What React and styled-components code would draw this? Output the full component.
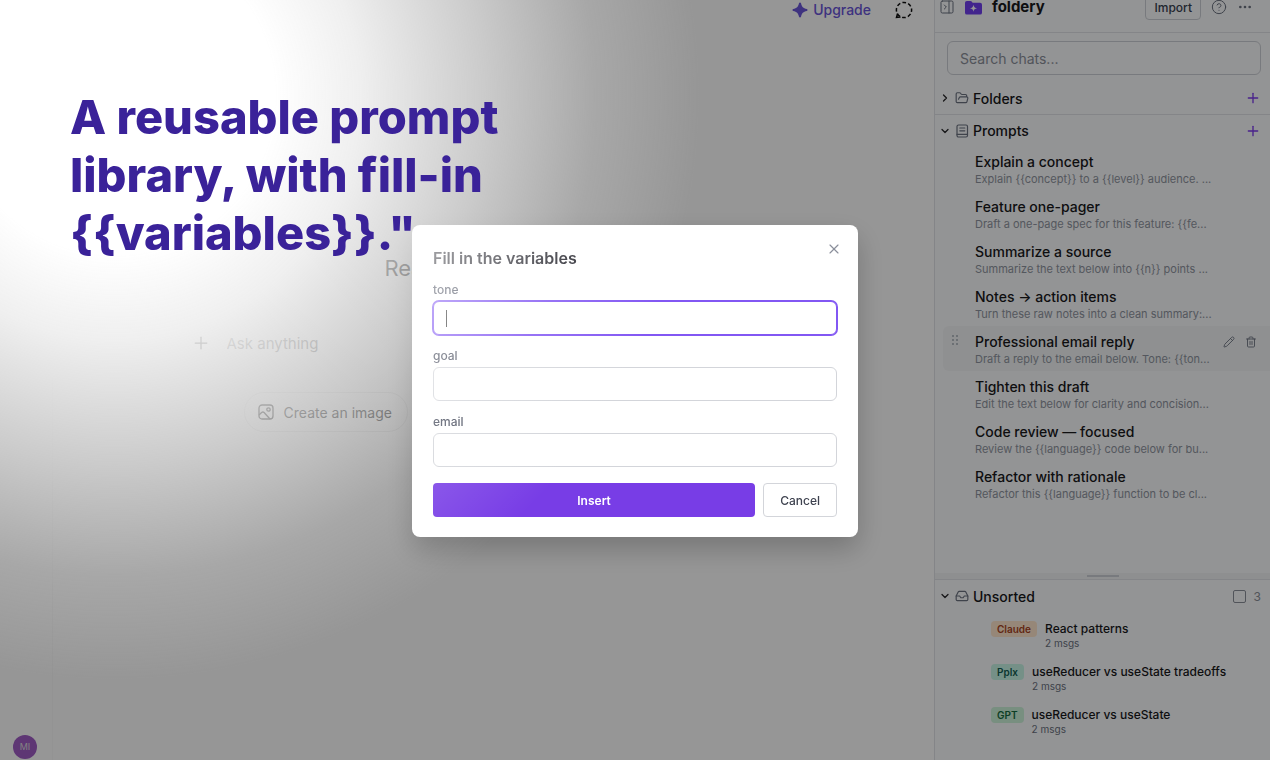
import styled, { createGlobalStyle, css } from "styled-components"
import {
    ChevronDown,
    ChevronRight,
    CircleHelp,
    Ellipsis,
    FolderOpen,
    Globe,
    Inbox,
    PanelRightClose,
    Pencil,
    PenLine,
    Plus,
    Trash2,
    X,
} from "lucide-react"

const prompts = [
    { title: "Explain a concept", text: "Explain {{concept}} to a {{level}} audience. ..." },
    { title: "Feature one-pager", text: "Draft a one-page spec for this feature: {{fe..." },
    { title: "Summarize a source", text: "Summarize the text below into {{n}} points ..." },
    { title: "Notes → action items", text: "Turn these raw notes into a clean summary:..." },
    { title: "Professional email reply", text: "Draft a reply to the email below. Tone: {{ton...", active: true },
    { title: "Tighten this draft", text: "Edit the text below for clarity and concision..." },
    { title: "Code review — focused", text: "Review the {{language}} code below for bu..." },
    { title: "Refactor with rationale", text: "Refactor this {{language}} function to be cl..." },
]

const chats = [
    { source: "Claude", title: "React patterns", count: "2 msgs" },
    { source: "Pplx", title: "useReducer vs useState tradeoffs", count: "2 msgs" },
    { source: "GPT", title: "useReducer vs useState", count: "2 msgs" },
]

const badgeColors = {
    Claude: { bg: "#ffe6cc", text: "#a8431f" },
    Pplx: { bg: "#c8f5e6", text: "#115e52" },
    GPT: { bg: "#ccf3da", text: "#166c40" },
}

const fields = ["tone", "goal", "email"]

const App = () => {
    return (
        <>
            <GlobalStyle />
            <Shell>
                <Rail>
                    <Avatar>MI</Avatar>
                </Rail>
                <ChatPage />
                <Panel />
            </Shell>
            <Scrim>
                <VariablesDialog />
            </Scrim>
            <Glow />
            <Headline>A reusable prompt library, with fill-in {"{{variables}}.\""}</Headline>
        </>
    )
}

const ChatPage = () => {
    return (
        <Main>
            <TopBar>
                <UpgradeButton>
                    <SparkIcon />
                    Upgrade
                </UpgradeButton>
                <IconButton aria-label="Temporary chat">
                    <DashedChatIcon />
                </IconButton>
            </TopBar>
            <Greeting>Ready when you are.</Greeting>
            <Composer>
                <Plus size={20} strokeWidth={1.5} />
                <ComposerInput placeholder="Ask anything" aria-label="Ask anything" />
            </Composer>
            <Chips>
                <Chip>
                    <ImageIcon />
                    Create an image
                </Chip>
                <Chip>
                    <PenLine size={16} strokeWidth={1.5} />
                    Write or edit
                </Chip>
                <Chip>
                    <Globe size={16} strokeWidth={1.5} />
                    Look something up
                </Chip>
            </Chips>
        </Main>
    )
}

const Panel = () => {
    return (
        <PanelBox>
            <PanelHeader>
                <IconButton aria-label="Close panel">
                    <PanelRightClose size={16} strokeWidth={1.5} />
                </IconButton>
                <LogoIcon />
                <Brand>foldery</Brand>
                <ImportButton>Import</ImportButton>
                <IconButton aria-label="Help">
                    <CircleHelp size={16} strokeWidth={1.5} />
                </IconButton>
                <IconButton aria-label="More">
                    <Ellipsis size={16} strokeWidth={2} />
                </IconButton>
            </PanelHeader>
            <SearchRow>
                <SearchInput placeholder="Search chats..." aria-label="Search chats" />
            </SearchRow>
            <Section>
                <ChevronRight size={12} strokeWidth={2.5} />
                <FolderOpen size={14} strokeWidth={2} color="#6b7280" />
                <SectionTitle>Folders</SectionTitle>
                <AddButton aria-label="Add folder">
                    <Plus size={16} strokeWidth={2} />
                </AddButton>
            </Section>
            <Section $line>
                <ChevronDown size={12} strokeWidth={2.5} />
                <NoteIcon />
                <SectionTitle>Prompts</SectionTitle>
                <AddButton aria-label="Add prompt">
                    <Plus size={16} strokeWidth={2} />
                </AddButton>
            </Section>
            <PromptList>
                {prompts.map((prompt) => (
                    <PromptRow key={prompt.title} $active={prompt.active}>
                        <GripSlot>{prompt.active && <GripIcon />}</GripSlot>
                        <PromptText>
                            <PromptTitle>{prompt.title}</PromptTitle>
                            <PromptPreview>{prompt.text}</PromptPreview>
                        </PromptText>
                        {prompt.active && (
                            <RowActions>
                                <IconButton aria-label="Edit prompt">
                                    <Pencil size={12} strokeWidth={1.75} />
                                </IconButton>
                                <IconButton aria-label="Delete prompt">
                                    <Trash2 size={12} strokeWidth={1.75} />
                                </IconButton>
                            </RowActions>
                        )}
                    </PromptRow>
                ))}
            </PromptList>
            <Resizer>
                <ResizerHandle />
            </Resizer>
            <UnsortedBox>
                <Section>
                    <ChevronDown size={12} strokeWidth={2.5} />
                    <Inbox size={14} strokeWidth={2} color="#6b7280" />
                    <SectionTitle>Unsorted</SectionTitle>
                    <SelectAll type="checkbox" aria-label="Select all" />
                    <Count>3</Count>
                </Section>
                <ChatList>
                    {chats.map((chat) => (
                        <ChatRow key={chat.title}>
                            <Badge $colors={badgeColors[chat.source]}>{chat.source}</Badge>
                            <div>
                                <ChatTitle>{chat.title}</ChatTitle>
                                <ChatMeta>{chat.count}</ChatMeta>
                            </div>
                        </ChatRow>
                    ))}
                </ChatList>
            </UnsortedBox>
        </PanelBox>
    )
}

const VariablesDialog = () => {
    return (
        <Dialog role="dialog" aria-labelledby="dialog-title">
            <CloseButton aria-label="Close">
                <X size={16} strokeWidth={1.75} />
            </CloseButton>
            <DialogTitle id="dialog-title">Fill in the variables</DialogTitle>
            {fields.map((field, i) => (
                <Field key={field}>
                    <Label htmlFor={field}>{field}</Label>
                    <InputWrap>
                        <Input id={field} $focused={i === 0} />
                        {i === 0 && <Caret />}
                    </InputWrap>
                </Field>
            ))}
            <DialogButtons>
                <InsertButton>Insert</InsertButton>
                <CancelButton>Cancel</CancelButton>
            </DialogButtons>
        </Dialog>
    )
}

//icons-------------------------------------------------
const SparkIcon = () => (
    <svg width="16" height="16" viewBox="0 0 16 16" fill="currentColor">
        <path d="M8 .4c.5 0 .8.3 1 .8.8 3.600 2.200 5 5.800 5.800.5.200.8.500.8 1s-.3.800-.8 1C11.200 9.800 9.800 11.200 9 14.800c-.2.500-.5.800-1 .8s-.8-.3-1-.8C6.200 11.200 4.800 9.800 1.200 9 .7 8.800.4 8.500.4 8s.3-.8.8-1C4.800 6.200 6.200 4.800 7 1.200 7.200.7 7.500.4 8 .4z" />
    </svg>
)

const DashedChatIcon = () => (
    <svg width="18" height="18" viewBox="0 0 18 18" fill="none" stroke="#0d0d0d" strokeWidth="1.500">
        <circle cx="9" cy="9" r="7.600" strokeDasharray="3.700 2.269" strokeDashoffset="1.850" />
        <path d="M2.600 12.500L1.500 16.500l4-.4" />
    </svg>
)

const ImageIcon = () => (
    <svg width="16" height="16" viewBox="0 0 16 16" fill="none" stroke="currentColor" strokeWidth="1.3">
        <rect x="1" y="1" width="14" height="14" rx="3" />
        <circle cx="10.500" cy="5.500" r="1.700" />
        <path d="M1 11l2.600-2.500c.8-.7 1.700-.7 2.500 0L12 15" />
    </svg>
)

const LogoIcon = () => (
    <svg width="17" height="15" viewBox="0 0 18 15">
        <path d="M0 2.500A2 2 0 0 1 2 .5h3.600c.6 0 1.100.3 1.500.7l1 1.300H16a2 2 0 0 1 2 2V13a2 2 0 0 1-2 2H2a2 2 0 0 1-2-2z" fill="#7040f0" />
        <path d="M9 4.500c.5 2.500 1.300 3.300 3.800 3.800-2.500.5-3.300 1.300-3.800 3.800-.5-2.500-1.300-3.300-3.800-3.800C7.700 7.800 8.500 7 9 4.500z" fill="#fff" />
    </svg>
)

const NoteIcon = () => (
    <svg width="14" height="14" viewBox="0 0 14 14" fill="none" stroke="#6b7280" strokeWidth="1.200" strokeLinecap="round">
        <rect x="2" y="1" width="10.500" height="12" rx="1.500" />
        <path d="M2 10.300h10.500M4.800 4h5M4.800 6.800h5" />
    </svg>
)

const GripIcon = () => (
    <svg width="8" height="12" viewBox="0 0 8 12" fill="#a5abb5">
        <circle cx="2" cy="2" r="1" />
        <circle cx="6" cy="2" r="1" />
        <circle cx="2" cy="6" r="1" />
        <circle cx="6" cy="6" r="1" />
        <circle cx="2" cy="10" r="1" />
        <circle cx="6" cy="10" r="1" />
    </svg>
)

//styling starts----------------------------------------
const violet = "#7c3aed"
const ink = "#18181b"
const muted = "#6b7280"
const line = "#e1e3e8"

const GlobalStyle = createGlobalStyle`
    * {
        box-sizing: border-box;
    }
    body {
        margin: 0;
        background: #fff;
        font-family: Inter, "Liberation Sans", sans-serif;
        color: ${ink};
        overflow: hidden;
    }
    button, input {
        font-family: inherit;
        margin: 0;
    }
    svg {
        flex: none;
        display: block;
    }
`

const Shell = styled.div`
    display: flex;
    height: 100vh;
`

const Rail = styled.nav`
    width: 53px;
    flex: none;
    display: flex;
    flex-direction: column;
    justify-content: flex-end;
    padding: 0 0 1px 13px;
    border-right: 1px solid #fafafa;
`

const Avatar = styled.div`
    width: 24px;
    height: 24px;
    border-radius: 50%;
    background: #a05cc6;
    color: #ddd;
    font-size: 9px;
    line-height: 24px;
    text-align: center;
`

const Main = styled.main`
    flex: 1;
    min-width: 0;
    display: flex;
    flex-direction: column;
    align-items: center;
`

const TopBar = styled.header`
    width: 100%;
    height: 20px;
    display: flex;
    align-items: center;
    justify-content: flex-end;
    gap: 24px;
    padding-right: 21px;
`

const IconButton = styled.button`
    border: none;
    background: none;
    padding: 0;
    color: ${muted};
    cursor: pointer;
`

const UpgradeButton = styled(IconButton)`
    display: flex;
    align-items: center;
    gap: 5px;
    color: #6a55d9;
    font-size: 14px;
    line-height: 18px;
    font-weight: 500;
`

const Greeting = styled.h1`
    margin: 232px 0 0;
    font-size: 22px;
    line-height: 32px;
    font-weight: 400;
    color: #0d0d0d;
`

const Composer = styled.div`
    width: 626px;
    max-width: 100%;
    height: 54px;
    margin-top: 32px;
    padding-left: 10px;
    display: flex;
    align-items: center;
    gap: 16px;
    border-radius: 27px;
    color: #0d0d0d;
`

const ComposerInput = styled.input`
    flex: 1;
    border: none;
    outline: none;
    background: none;
    padding: 0;
    font-size: 15px;
    color: ${ink};
    &::placeholder{
        color: #7a7a7a;
    }
`

const Chips = styled.div`
    display: flex;
    gap: 8px;
    margin-top: 22px;
`

const Chip = styled.button`
    display: flex;
    align-items: center;
    gap: 10px;
    height: 40px;
    padding: 0 15px 0 13px;
    border: 1px solid #eeeeee;
    border-radius: 20px;
    background: none;
    color: #555;
    font-size: 14px;
`

const PanelBox = styled.aside`
    width: 336px;
    flex: none;
    display: flex;
    flex-direction: column;
    background: #fafbfd;
    border-left: 1px solid ${line};
`

const PanelHeader = styled.header`
    display: flex;
    align-items: center;
    gap: 10px;
    height: 33px;
    padding: 0 17px 18px 4px;
    border-bottom: 1px solid ${line};
`

const Brand = styled.strong`
    flex: 1;
    font-size: 15px;
    line-height: 14px;
    font-weight: 700;
`

const ImportButton = styled.button`
    height: 26px;
    padding: 0 8px;
    border: 1px solid #cdd0d6;
    border-radius: 4px;
    background: none;
    color: #374151;
    font-size: 12px;
    font-weight: 500;
`

const SearchRow = styled.div`
    display: flex;
    padding: 8px 9px 7px 12px;
`

const SearchInput = styled.input`
    flex: 1;
    height: 34px;
    padding: 0 12px;
    border: 1px solid #cdd0d6;
    border-radius: 6px;
    outline: none;
    background: none;
    font-size: 14px;
    color: ${ink};
    &::placeholder{
        color: #8b909a;
    }
`

const Section = styled.div`
    display: flex;
    align-items: center;
    gap: 4px;
    height: 32px;
    padding: 0 9px 0 4px;
    color: #27272a;
    ${(p) => p.$line && css`
        border-top: 1px solid ${line};
    `}
`

const SectionTitle = styled.h2`
    flex: 1;
    margin: 0;
    font-size: 14px;
    font-weight: 500;
    color: ${ink};
`

const AddButton = styled(IconButton)`
    color: ${violet};
`

const PromptList = styled.div`
    flex: 1;
    min-height: 0;
    padding-left: 8px;
`

const PromptRow = styled.div`
    display: flex;
    height: 45px;
    padding: 6px 13px 0 8px;
    border-radius: 6px 0 0 6px;
    ${(p) => p.$active && css`
        background: #f3f5f7;
    `}
`

const GripSlot = styled.div`
    width: 24px;
    padding-top: 2px;
`

const PromptText = styled.div`
    flex: 1;
    min-width: 0;
`

const PromptTitle = styled.div`
    font-size: 14px;
    line-height: 20px;
    font-weight: 500;
`

const PromptPreview = styled.div`
    font-size: 11px;
    line-height: 14px;
    color: #8f95a0;
    white-space: nowrap;
`

const RowActions = styled.div`
    display: flex;
    gap: 10px;
    height: 20px;
`

const Resizer = styled.div`
    display: flex;
    align-items: center;
    justify-content: center;
    height: 7px;
    background: #f2f3f5;
    border-bottom: 1px solid ${line};
`

const ResizerHandle = styled.div`
    width: 32px;
    height: 2px;
    background: #cdd0d6;
`

const UnsortedBox = styled.section`
    height: 180px;
`

const SelectAll = styled.input`
    appearance: none;
    width: 13px;
    height: 13px;
    border: 1px solid #8b909a;
    border-radius: 2px;
`

const Count = styled.span`
    padding-left: 4px;
    font-size: 12px;
    color: #8b909a;
`

const ChatList = styled.div`
    padding-left: 56px;
`

const ChatRow = styled.div`
    display: flex;
    align-items: flex-start;
    gap: 8px;
    height: 43px;
    padding-top: 9px;
`

const Badge = styled.span`
    padding: 0 6px;
    border-radius: 4px;
    background: ${(p) => p.$colors.bg};
    color: ${(p) => p.$colors.text};
    font-size: 10px;
    line-height: 16px;
    font-weight: 600;
`

const ChatTitle = styled.div`
    font-size: 12px;
    line-height: 16px;
    font-weight: 500;
`

const ChatMeta = styled.div`
    font-size: 10px;
    line-height: 12px;
    color: ${muted};
`

const Scrim = styled.div`
    position: fixed;
    inset: 0;
    display: flex;
    align-items: center;
    justify-content: center;
    padding-top: 2px;
    background: rgba(0,0,0,0.41);
`

const Dialog = styled.div`
    position: relative;
    width: 446px;
    padding: 20px 21px;
    border-radius: 8px;
    background: #fff;
    box-shadow: 0 12px 28px rgba(0,0,0,0.22);
`

const CloseButton = styled(IconButton)`
    position: absolute;
    top: 16px;
    right: 16px;
    color: #8b8f9b;
`

const DialogTitle = styled.h2`
    margin: 0 0 10px;
    font-size: 16px;
    line-height: 26px;
    font-weight: 600;
    color: #27272f;
`

const Field = styled.div`
    margin-bottom: 12px;
`

const Label = styled.label`
    display: block;
    margin-bottom: 2px;
    font-size: 12px;
    line-height: 18px;
    font-weight: 500;
    color: #4b5060;
`

const InputWrap = styled.div`
    position: relative;
`

const Input = styled.input`
    display: block;
    width: 100%;
    height: 34px;
    padding: 0 12px;
    border: 1px solid #d3d5da;
    border-radius: 6px;
    outline: none;
    background: #fff;
    font-size: 14px;
    ${(p) => p.$focused && css`
        border-color: #8257f3;
        box-shadow: 0 0 0 1px #8257f3;
    `}
`

const Caret = styled.span`
    position: absolute;
    left: 13px;
    top: 9px;
    width: 1px;
    height: 17px;
    background: #333;
`

const DialogButtons = styled.div`
    display: flex;
    gap: 8px;
    margin-top: 16px;
`

const InsertButton = styled.button`
    flex: 1;
    height: 34px;
    border: none;
    border-radius: 4px;
    background: #783de6;
    color: #fff;
    font-size: 12px;
    font-weight: 600;
`

const CancelButton = styled.button`
    height: 34px;
    padding: 0 16px;
    border: 1px solid #d3d5da;
    border-radius: 4px;
    background: #fff;
    color: #3f4350;
    font-size: 12px;
    font-weight: 500;
`

const Glow = styled.div`
    position: fixed;
    inset: 0;
    pointer-events: none;
    background: radial-gradient(circle at 115px 95px, #fff 0, #fff 160px, rgba(255,255,255,0.85) 245px, rgba(255,255,255,0.5) 370px, rgba(255,255,255,0.17) 480px, rgba(255,255,255,0) 585px);
`

const Headline = styled.p`
    position: fixed;
    left: 70px;
    top: 88px;
    width: 450px;
    margin: 0;
    font-size: 47px;
    line-height: 58px;
    font-weight: 800;
    color: #3a2299;
`

export default App
